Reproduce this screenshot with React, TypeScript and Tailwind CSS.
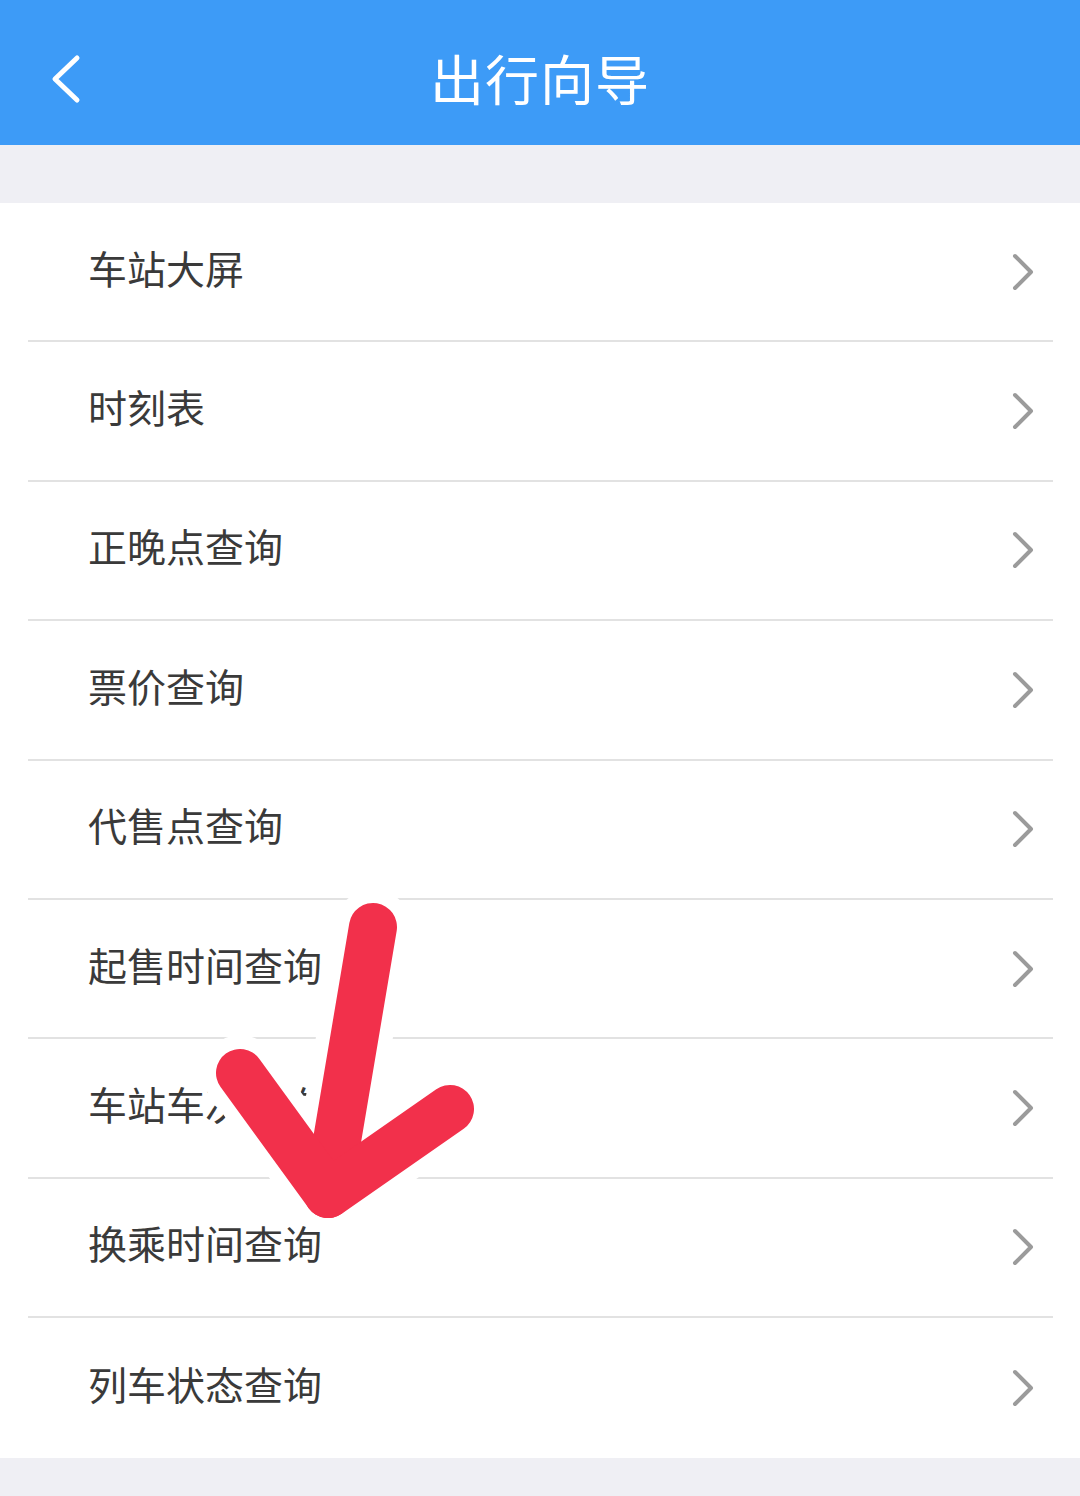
const items = [
  "车站大屏",
  "时刻表",
  "正晚点查询",
  "票价查询",
  "代售点查询",
  "起售时间查询",
  "车站车次查询",
  "换乘时间查询",
  "列车状态查询",
];

const font = {
  fontFamily: '"Noto Sans CJK SC", "Noto Sans", sans-serif',
};

const Chevron = () => (
  <svg width="24" height="40" viewBox="0 0 24 40" className="shrink-0">
    <path
      d="M4 4 L20 20 L4 36"
      fill="none"
      stroke="#9b9b9b"
      strokeWidth="4"
      strokeLinecap="round"
      strokeLinejoin="round"
    />
  </svg>
);

const App = () => {
  return (
    <div className="relative w-[1080px] h-[1496px] bg-[#efeff4] overflow-hidden" style={font}>
      {/* Header */}
      <div className="relative h-[145px] bg-[#3d9bf7] flex items-center justify-center">
        <svg
          width="40"
          height="52"
          viewBox="0 0 40 52"
          className="absolute left-[46px] top-[53px]"
        >
          <path
            d="M31 5 L9 26 L31 47"
            fill="none"
            stroke="#ffffff"
            strokeWidth="5"
            strokeLinecap="round"
            strokeLinejoin="round"
          />
        </svg>
        <h1 className="text-white text-[54px] leading-none tracking-[1px] mt-[10px]">出行向导</h1>
      </div>

      <div className="h-[58px]" />

      {/* List */}
      <div className="bg-white">
        {items.map((item, i) => (
          <div key={item} className="pl-[28px] pr-[27px]">
            <div
              className={
                "h-[139.4px] flex items-center justify-between " +
                (i < items.length - 1 ? "border-b-[2px] border-[#e2e2e2]" : "")
              }
            >
              <span className="pl-[60px] text-[39px] text-[#3a3a3a] leading-none -mt-[9px]">
                {item}
              </span>
              <div className="pr-[18px]">
                <Chevron />
              </div>
            </div>
          </div>
        ))}
      </div>

      {/* Red arrow annotation */}
      <svg
        width="1080"
        height="1496"
        viewBox="0 0 1080 1496"
        className="absolute left-0 top-0 pointer-events-none"
      >
        <g fill="none" strokeLinecap="round" strokeLinejoin="round">
          <g stroke="#ffffff" strokeWidth="76">
            <path d="M373 927 L328 1194" />
            <path d="M240 1073 L328 1194 L450 1109" />
          </g>
          <g stroke="#f2304b" strokeWidth="48">
            <path d="M373 927 L328 1194" />
            <path d="M240 1073 L328 1194 L450 1109" />
          </g>
        </g>
      </svg>
    </div>
  );
};

export default App;
